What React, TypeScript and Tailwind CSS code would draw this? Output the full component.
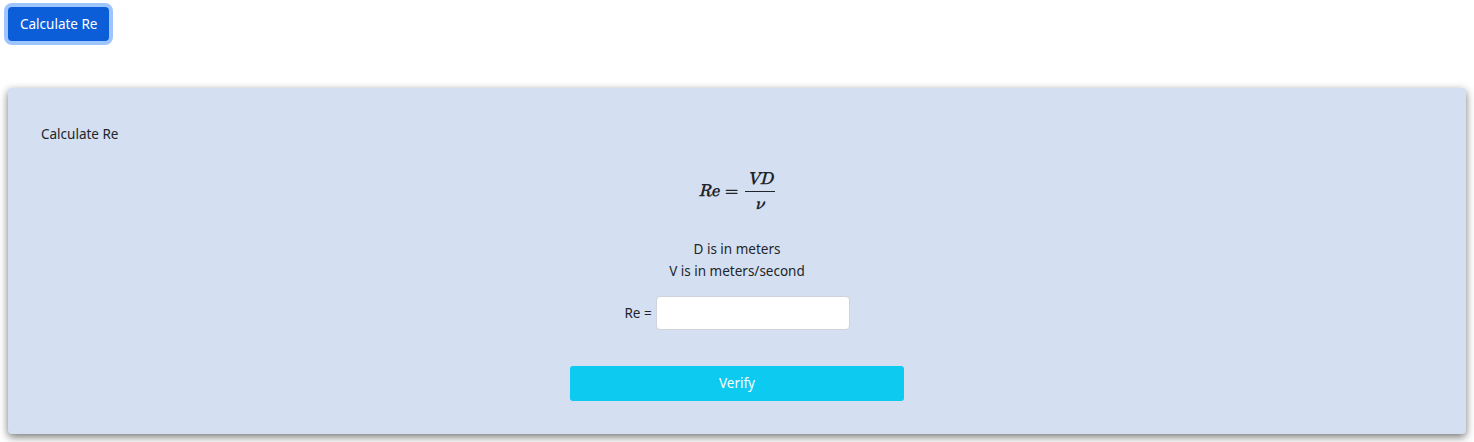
import React, { useState } from 'react'

const font = { fontFamily: '"Segoe UI", "Noto Sans", "Open Sans", sans-serif' }
const mathFont = { fontFamily: '"Latin Modern Math", "Liberation Serif", serif' }

function Formula() {
  return (
    <div className="flex items-center justify-center text-[#212529]" style={mathFont}>
      <span className="text-[17px] font-bold italic">Re</span>
      <span className="ml-[6px] mr-[7px] text-[17px] font-bold">=</span>
      <span className="inline-flex flex-col items-center">
        <span className="px-[2px] pb-[1px] text-[17px] leading-[22px] font-bold italic">VD</span>
        <span className="h-[1px] w-[30px] bg-[#212529]" />
        <span className="pt-[2px] text-[17px] leading-[20px] font-bold italic">ν</span>
      </span>
    </div>
  )
}

export default function App() {
  const [value, setValue] = useState('')

  return (
    <div className="min-h-screen bg-white text-[13.5px] text-[#212529]" style={font}>
      <div className="pt-[7px] pl-[8px]">
        <button
          type="button"
          className="rounded-[4px] bg-[#0b5ed7] px-[12px] py-[7px] text-[13.5px] leading-[20px] text-white ring-4 ring-[#9ec5fe]"
        >
          Calculate Re
        </button>
      </div>

      <div className="mx-[8px] mt-[47px] rounded-[4px] bg-[#d4dff1] px-[33px] pt-[35px] pb-[33px] shadow-[0_3px_8px_rgba(0,0,0,0.55)]">
        <p className="leading-[22px]">Calculate Re</p>

        <div className="mt-[23px]">
          <Formula />
        </div>

        <div className="mt-[24px] text-center leading-[22px]">
          <p>D is in meters</p>
          <p>V is in meters/second</p>
        </div>

        <div className="mt-[14px] flex items-center justify-center">
          <label className="mr-[4px] leading-[22px]">Re =</label>
          <input
            value={value}
            onChange={(e) => setValue(e.target.value)}
            className="h-[34px] w-[194px] rounded-[4px] border border-[#ced4da] bg-white px-[8px] outline-none"
          />
        </div>

        <div className="mt-[36px] flex justify-center">
          <button
            type="button"
            className="h-[35px] w-[334px] rounded-[3px] bg-[#0dcaf0] text-[13.5px] text-white"
          >
            Verify
          </button>
        </div>
      </div>
    </div>
  )
}
